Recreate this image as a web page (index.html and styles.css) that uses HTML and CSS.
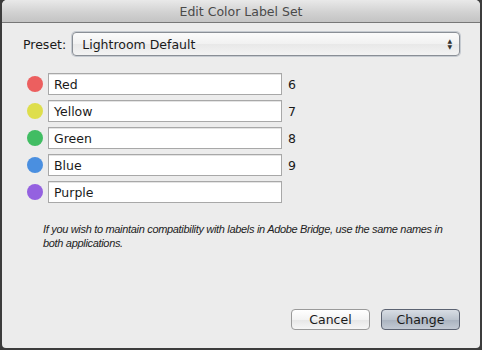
FILE: index.html
```html
<!DOCTYPE html>
<html lang="en">
<head>
  <meta charset="UTF-8">
  <title>Edit Color Label Set</title>
  <link rel="stylesheet" href="styles.css">
</head>
<body>
  <div class="window">
    <div class="titlebar">Edit Color Label Set</div>
    <div class="content">
      <div class="preset-row">
        <span class="preset-label">Preset:</span>
        <div class="select">
          <span>Lightroom Default</span>
          <span class="arrows">&#9650;<br>&#9660;</span>
        </div>
      </div>

      <div class="labels">
        <div class="label-row">
          <span class="dot red"></span>
          <div class="field">Red</div>
          <span class="key">6</span>
        </div>
        <div class="label-row">
          <span class="dot yellow"></span>
          <div class="field">Yellow</div>
          <span class="key">7</span>
        </div>
        <div class="label-row">
          <span class="dot green"></span>
          <div class="field">Green</div>
          <span class="key">8</span>
        </div>
        <div class="label-row">
          <span class="dot blue"></span>
          <div class="field">Blue</div>
          <span class="key">9</span>
        </div>
        <div class="label-row">
          <span class="dot purple"></span>
          <div class="field">Purple</div>
          <span class="key"></span>
        </div>
      </div>

      <p class="note">If you wish to maintain compatibility with labels in Adobe Bridge, use the same names in both applications.</p>

      <div class="buttons">
        <button class="btn">Cancel</button>
        <button class="btn primary">Change</button>
      </div>
    </div>
  </div>
</body>
</html>
```

FILE: styles.css
```css
* {
  margin: 0;
  padding: 0;
  box-sizing: border-box;
}
body {
  background: #3c3c3c;
  font-family: 'DejaVu Sans', sans-serif;
  font-size: 12.5px;
  color: #1a1a1a;
  width: 482px;
  height: 350px;
  overflow: hidden;
}
/* Jendela dialog */
.window {
  margin: 0 2px 2px 2px;
  height: 348px;
  background: #ececec;
  border-radius: 5px 5px 4px 4px;
  display: flex;
  flex-direction: column;
  overflow: hidden;
}
.titlebar {
  height: 23px;
  background: linear-gradient(#e9e9e9, #d0d0d0 60%, #c4c4c4);
  border-bottom: 1px solid #777;
  text-align: center;
  line-height: 23px;
  color: #4a4a4a;
}
.content {
  flex: 1;
  padding: 9px 20px 18px 21px;
  display: flex;
  flex-direction: column;
}
/* Preset */
.preset-row {
  display: flex;
  align-items: center;
  gap: 6px;
}
.select {
  flex: 1;
  height: 24px;
  border: 1px solid #8a8f96;
  border-radius: 4px;
  background: linear-gradient(#fbfbfb, #f1f1f1 50%, #e8e8e8 51%, #f3f3f3);
  box-shadow: 0 0 0 1px #c6cbd1;
  display: flex;
  align-items: center;
  justify-content: space-between;
  padding: 0 7px 0 9px;
}
.arrows {
  font-size: 6px;
  line-height: 6px;
  color: #333;
  text-align: center;
}
/* Daftar label warna */
.labels {
  margin-top: 17px;
  display: flex;
  flex-direction: column;
  gap: 5px;
}
.label-row {
  display: flex;
  align-items: center;
  height: 22px;
}
.dot {
  width: 16px;
  height: 16px;
  border-radius: 50%;
  margin-left: 4px;
  margin-right: 5px;
}
.red { background: #ec5f5f; }
.yellow { background: #dede4c; }
.green { background: #41bd63; }
.blue { background: #4a8fe0; }
.purple { background: #9461e0; }
.field {
  width: 234px;
  height: 22px;
  border: 1px solid #a8a8a8;
  background: #fff;
  box-shadow: inset 0 1px 0 #e4e4e4;
  padding: 0 0 0 5px;
  line-height: 21px;
}
.key {
  margin-left: 6px;
}
/* Catatan */
.note {
  margin-top: 20px;
  margin-left: 20px;
  font-family: 'Liberation Sans', sans-serif;
  font-style: italic;
  font-size: 11px;
  line-height: 13.5px;
  letter-spacing: -0.32px;
  color: #222;
  width: 410px;
}
/* Tombol */
.buttons {
  margin-top: auto;
  display: flex;
  justify-content: flex-end;
  gap: 11px;
}
.btn {
  width: 79px;
  height: 21px;
  border: 1px solid #9a9a9a;
  border-radius: 4px;
  background: linear-gradient(#ffffff, #f3f3f3 50%, #e6e6e6 51%, #f6f6f6);
  font-family: 'DejaVu Sans', sans-serif;
  font-size: 12.5px;
  color: #1a1a1a;
}
.btn.primary {
  border-color: #5c6372;
  background: linear-gradient(#d8dde4, #bcc4ce 50%, #a9b2bf 51%, #c3cad4);
}
```
